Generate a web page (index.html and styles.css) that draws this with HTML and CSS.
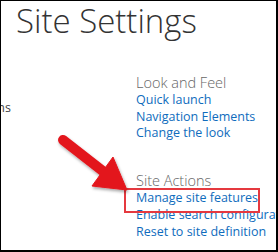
FILE: index.html
```html
<!DOCTYPE html>
<html lang="en">
<head>
	<meta charset="UTF-8">
	<title>Site Settings</title>
	<link rel="stylesheet" href="styles.css">
</head>
<body>
	<div class="page">
		<h1 class="title">Site Settings</h1>
		<div class="columns">
			<div class="col-left">
				<p class="plain">Site app permissions</p>
			</div>
			<div class="col-right">
				<div class="section">
					<h2>Look and Feel</h2>
					<ul>
						<li><a href="#">Quick launch</a></li>
						<li><a href="#">Navigation Elements</a></li>
						<li><a href="#">Change the look</a></li>
					</ul>
				</div>
				<div class="section">
					<h2>Site Actions</h2>
					<ul>
						<li><a href="#">Manage site features</a></li>
						<li><a href="#">Enable search configuration export</a></li>
						<li><a href="#">Reset to site definition</a></li>
					</ul>
				</div>
			</div>
		</div>

		<!-- annotation -->
		<div class="mark"></div>
		<svg class="arrow" width="90" height="72" viewBox="0 0 90 72">
			<defs>
				<filter id="shadow" x="-20%" y="-20%" width="140%" height="140%">
					<feDropShadow dx="1" dy="2" stdDeviation="1.5" flood-color="#000" flood-opacity="0.35"/>
				</filter>
			</defs>
			<g filter="url(#shadow)" fill="#e3161d" stroke="#e3161d">
				<line x1="13" y1="10" x2="54" y2="42" stroke-width="10" stroke-linecap="round"/>
				<polygon points="63,27 42,56 77,60" stroke-width="1" stroke-linejoin="round"/>
			</g>
		</svg>
	</div>
</body>
</html>
```

FILE: styles.css
```css
html,body{margin:0;padding:0;}
body{background:#fff;font-family:"Open Sans","Liberation Sans",sans-serif;}

.page{
	position:relative;
	width:278px;height:252px;
	box-sizing:border-box;
	border-left:1px solid #000;border-top:1px solid #000;
	border-right:2px solid #000;border-bottom:2px solid #000;
	overflow:hidden;
}

.title{
	margin:0 0 0 15px;
	font-size:33px;line-height:40px;
	font-weight:300;
	color:#333;
	white-space:nowrap;
}

.columns{display:flex;}

.col-left{
	width:10px;
	flex:none;
	display:flex;
	justify-content:flex-end;
	overflow:hidden;
}
.col-left .plain{
	margin:58px 0 0;
	font-size:12.5px;line-height:17px;
	color:#444;
	white-space:nowrap;
}

.col-right{margin-left:125px;padding-top:32px;white-space:nowrap;}
.section + .section{margin-top:29px;}
.section h2{
	margin:0;
	font-size:14.5px;line-height:19px;
	font-weight:300;
	color:#666;
}
.section ul{margin:0;padding:0;list-style:none;}
.section li{font-size:12.5px;line-height:16.7px;}
.section a{color:#0f6cbd;text-decoration:none;}

.mark{
	position:absolute;
	left:123px;top:187px;
	width:132px;height:21px;
	border:2px solid #e5393f;
}
.arrow{position:absolute;left:49px;top:129px;overflow:visible;}
```
